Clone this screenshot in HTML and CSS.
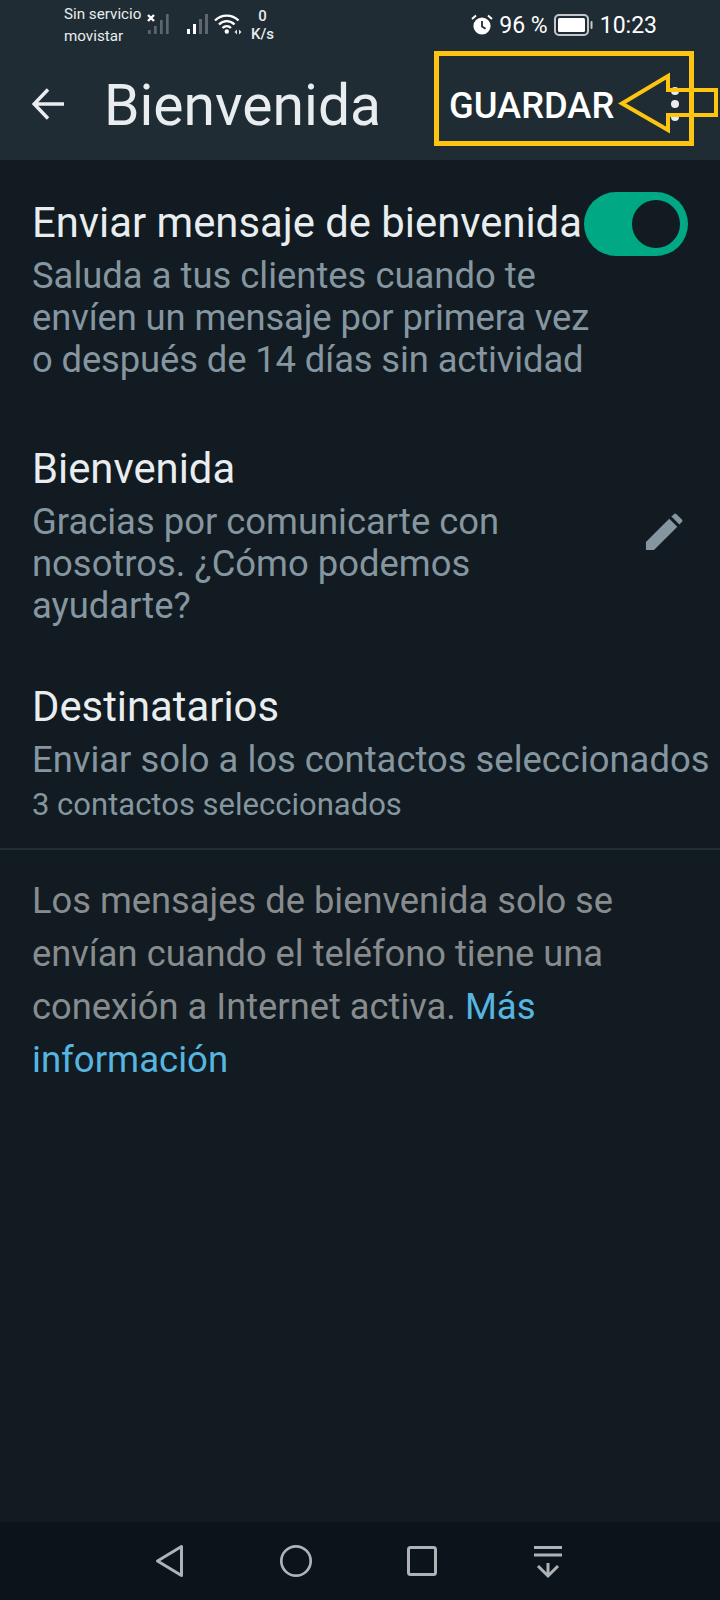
FILE: index.html
```html
<!DOCTYPE html>
<html lang="es">
<head>
    <meta charset="UTF-8">
    <meta name="viewport" content="width=device-width, initial-scale=1.0">
    <title>Bienvenida</title>
    <link rel="stylesheet" href="styles.css">
</head>
<body>
    <div class="screen">
        <header class="top">
            <div class="status">
                <div class="carrier">
                    <span>Sin servicio</span>
                    <span>movistar</span>
                </div>
                <svg class="sig1" width="26" height="26" viewBox="0 0 26 26">
                    <g fill="#5c666c">
                        <rect x="2" y="18" width="2.700" height="4"/>
                        <rect x="8" y="14" width="2.700" height="8"/>
                        <rect x="14" y="8" width="2.700" height="14"/>
                        <rect x="20" y="2" width="2.700" height="20"/>
                    </g>
                    <path d="M2 3l6 6M8 3L2 9" fill="none" stroke="#fff" stroke-width="2.400"/>
                </svg>
                <svg class="sig2" width="24" height="26" viewBox="0 0 24 26">
                    <rect x="1" y="17" width="3" height="5" fill="#fff"/>
                    <rect x="7" y="12" width="3" height="10" fill="#fff"/>
                    <rect x="13" y="7" width="3" height="15" fill="#5c666c"/>
                    <rect x="19" y="2" width="3" height="20" fill="#5c666c"/>
                </svg>
                <svg class="wifi" width="28" height="24" viewBox="0 0 28 24">
                    <g fill="none" stroke="#fff" stroke-width="2.400">
                        <path d="M1 7.500C7.500 1 18 1 24.500 7.500"/>
                        <path d="M5 11.500C9.500 7 16 7 20.500 11.500"/>
                        <path d="M8.500 15C11 12.600 14.500 12.600 17 15"/>
                    </g>
                    <circle cx="12.800" cy="18.500" r="2.200" fill="#fff"/>
                    <path d="M20.500 19l2.500-2.500v5zM27.500 19l-2.500-2.500v5z" fill="#dfe3e5"/>
                </svg>
                <div class="speed">
                    <span>0</span>
                    <span>K/s</span>
                </div>
                <div class="status-right">
                    <svg width="22" height="22" viewBox="0 0 22 22">
                        <circle cx="11" cy="12" r="8.600" fill="#fff"/>
                        <path d="M11 7v5.400l3.600 2.400" fill="none" stroke="#202c33" stroke-width="1.800"/>
                        <path d="M1 5l4-3.400M21 5l-4-3.400" stroke="#fff" stroke-width="2" fill="none"/>
                    </svg>
                    <span class="pct">96 %</span>
                    <svg width="40" height="24" viewBox="0 0 40 24">
                        <rect x="1" y="2" width="33" height="20" rx="4" fill="none" stroke="#c3c7ca" stroke-width="2"/>
                        <rect x="4" y="5" width="27" height="14" rx="1.500" fill="#fff"/>
                        <rect x="36.500" y="8" width="2" height="8" rx="1" fill="#c3c7ca"/>
                    </svg>
                    <span class="clock">10:23</span>
                </div>
            </div>
            <div class="bar">
                <svg class="back" width="34" height="34" viewBox="0 0 34 34">
                    <path d="M32 17H3M16 2.500L2.200 17 16 31.500" fill="none" stroke="#e9edef" stroke-width="3.400"/>
                </svg>
                <h1>Bienvenida</h1>
                <span class="save">GUARDAR</span>
                <div class="dots"><i></i><i></i><i></i></div>
            </div>
        </header>

        <main class="content">
            <section class="row row-first">
                <div class="row-text">
                    <h2>Enviar mensaje de bienvenida</h2>
                    <p>Saluda a tus clientes cuando te<br><span class="tight">envíen un mensaje por primera vez<br>o después de 14 días sin actividad</span></p>
                </div>
                <div class="toggle"><span class="knob"></span></div>
            </section>

            <section class="row row-second">
                <div class="row-text">
                    <h2>Bienvenida</h2>
                    <p>Gracias por comunicarte con<br>nosotros. ¿Cómo podemos<br>ayudarte?</p>
                </div>
                <svg class="edit" width="38" height="38" viewBox="0 0 40 40">
                    <path d="M1 39v-8.500L25.500 6l8.500 8.500L9.500 39z" fill="#8696a0"/>
                    <path d="M27.800 3.800l2.600-2.600c.8-.8 2-.8 2.800 0l5.600 5.600c.8.8.8 2 0 2.800l-2.600 2.600z" fill="#8696a0"/>
                </svg>
            </section>

            <section class="row row-last">
                <div class="row-text">
                    <h2>Destinatarios</h2>
                    <p>Enviar solo a los contactos seleccionados</p>
                    <p class="small">3 contactos seleccionados</p>
                </div>
            </section>

            <p class="note">Los mensajes de bienvenida solo se<br>envían cuando el teléfono tiene una<br>conexión a Internet activa. <a href="#">Más<br>información</a></p>
        </main>

        <nav class="nav">
            <svg width="34" height="36" viewBox="0 0 34 36">
                <path d="M4.500 18L28.500 3.500v29z" fill="none" stroke="#b0b3b5" stroke-width="3" stroke-linejoin="round"/>
            </svg>
            <svg width="34" height="36" viewBox="0 0 34 36">
                <circle cx="17" cy="18" r="14.700" fill="none" stroke="#b0b3b5" stroke-width="2.700"/>
            </svg>
            <svg width="34" height="36" viewBox="0 0 34 36">
                <rect x="3.500" y="4.500" width="27" height="27" rx="2" fill="none" stroke="#b0b3b5" stroke-width="3"/>
            </svg>
            <svg width="34" height="36" viewBox="0 0 34 36">
                <path d="M3 4.500h28M3 12h28M17 20v13M7 23l10 10 10-10" fill="none" stroke="#b0b3b5" stroke-width="3"/>
            </svg>
        </nav>

        <svg class="marks" width="720" height="160" viewBox="0 0 720 160">
            <rect x="436.500" y="53.500" width="255" height="90" fill="none" stroke="#fdc512" stroke-width="5"/>
            <path d="M622 103.500L668 76v14h48v25h-48v15z" fill="none" stroke="#fdc512" stroke-width="4"/>
        </svg>
    </div>
</body>
</html>
```

FILE: styles.css
```css
/* General */
body {
    margin: 0;
    background: #111b21;
    font-family: Roboto, "Liberation Sans", sans-serif;
}

.screen {
    position: relative;
    width: 720px;
    height: 1600px;
    display: flex;
    flex-direction: column;
    overflow: hidden;
}

/* Header */
.top {
    height: 160px;
    background: #202c33;
    flex-shrink: 0;
}

.status {
    height: 50px;
    display: flex;
    align-items: center;
    padding-left: 64px;
    padding-right: 63px;
    color: #fff;
}

.carrier {
    display: flex;
    flex-direction: column;
    font-size: 15.200px;
    line-height: 22px;
    color: #e9edef;
    width: 82px;
}

.sig2 {
    margin-left: 14px;
}

.wifi {
    margin-left: 4px;
}

.speed {
    display: flex;
    flex-direction: column;
    align-items: center;
    margin-left: 9px;
    font-size: 15px;
    line-height: 18px;
    font-weight: 500;
    color: #e9edef;
}

.status-right {
    margin-left: auto;
    display: flex;
    align-items: center;
    gap: 6px;
    font-size: 23px;
}

.bar {
    height: 110px;
    display: flex;
    align-items: center;
    padding: 0 0 3px 32px;
    box-sizing: border-box;
}

.back {
    flex-shrink: 0;
}

h1 {
    margin: 0 0 0 38px;
    padding-top: 4px;
    font-size: 57px;
    font-weight: 400;
    color: #e9edef;
    width: 345px;
}

.save {
    padding-top: 4px;
    font-size: 36.300px;
    font-weight: 500;
    color: #fff;
}

.dots {
    margin-left: 57px;
    display: flex;
    flex-direction: column;
    gap: 5px;
}

.dots i {
    width: 8px;
    height: 8px;
    border-radius: 50%;
    background: #e9edef;
}

/* Rows */
.content {
    flex: 1;
}

.row {
    display: flex;
    align-items: center;
    justify-content: space-between;
    padding: 0 32px;
}

.row-text {
    flex: 1;
    min-width: 0;
}

.row-first {
    align-items: flex-start;
    margin-top: 31px;
}

.row-second {
    margin-top: 56px;
}

.row-last {
    margin-top: 48px;
    padding-bottom: 19px;
    border-bottom: 2px solid #222d34;
}

h2 {
    margin: 0;
    font-size: 41.800px;
    line-height: 64px;
    font-weight: 400;
    color: #e9edef;
    white-space: nowrap;
}

.row-text p {
    margin: 0;
    font-size: 36.400px;
    line-height: 42px;
    color: #8696a0;
    white-space: nowrap;
}

.row-text .small {
    font-size: 31px;
    line-height: 48px;
}

.tight {
    letter-spacing: -0.120px;
}

.toggle {
    width: 104px;
    height: 64px;
    border-radius: 32px;
    background: #00a884;
    display: flex;
    align-items: center;
    justify-content: flex-end;
    padding-right: 8px;
    box-sizing: border-box;
    flex-shrink: 0;
    margin-top: 1px;
}

.knob {
    width: 48px;
    height: 48px;
    border-radius: 50%;
    background: #111b21;
}

.edit {
    margin-right: 5px;
}

.note {
    margin: 24px 32px 0;
    font-size: 36.300px;
    line-height: 53px;
    color: #888c8f;
}

.note a {
    color: #56b6e0;
    font-size: 36.600px;
    text-decoration: none;
}

/* Nav */
.nav {
    height: 78px;
    background: #0b141a;
    display: flex;
    align-items: center;
    padding-left: 153px;
    gap: 92px;
    flex-shrink: 0;
}

/* Annotation */
.marks {
    position: absolute;
    left: 0;
    top: 0;
}
```
